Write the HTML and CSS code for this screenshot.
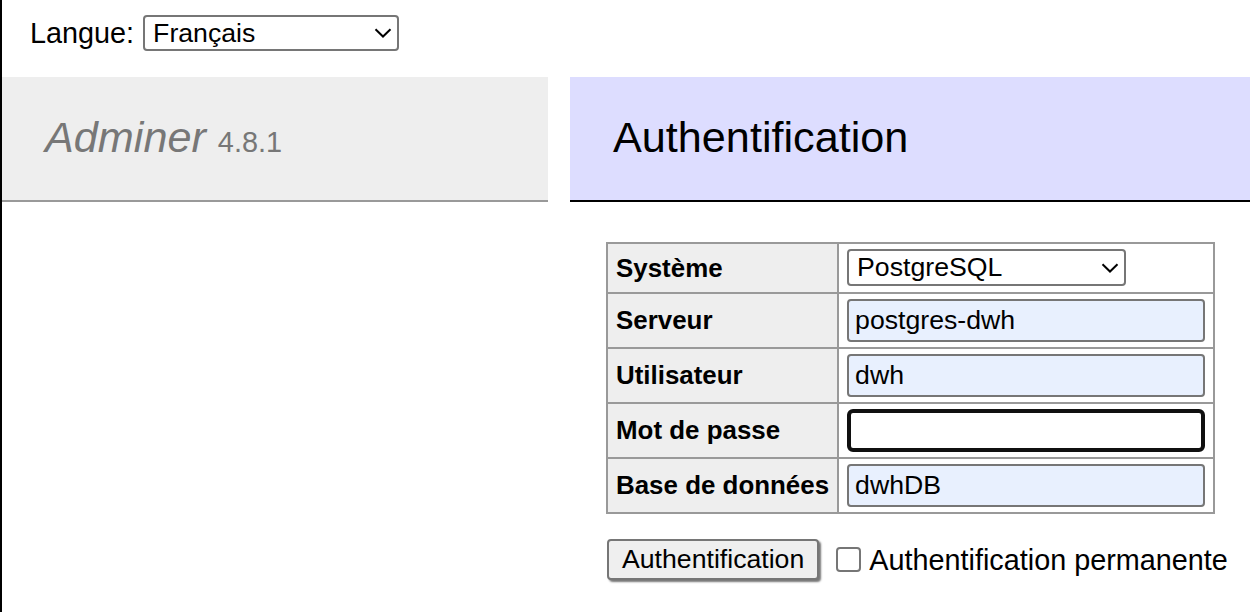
FILE: index.html
```html
<!DOCTYPE html>
<html lang="fr">
<head>
<meta charset="utf-8">
<title>Authentification - Adminer</title>
<link rel="stylesheet" href="styles.css">
</head>
<body>
<form class="lang">
  <label class="lang-label">Langue:
    <span class="select-wrap lang-select">
      <select class="select"><option>Français</option></select>
      <svg class="chevron" viewBox="0 0 18 10" width="18" height="10"><path d="M1.5 1.2 L9 8.5 L16.5 1.2" fill="none" stroke="#000" stroke-width="2"/></svg>
    </span>
  </label>
</form>
<div class="layout">
  <div class="menu">
    <h1><a class="brand">Adminer</a> <span class="version">4.8.1</span></h1>
  </div>
  <div class="content">
    <h2>Authentification</h2>
    <form class="login">
      <table class="login-table">
        <tr class="first">
          <th>Système</th>
          <td>
            <span class="select-wrap system-select">
              <select class="select"><option>PostgreSQL</option></select>
              <svg class="chevron" viewBox="0 0 18 10" width="18" height="10"><path d="M1.5 1.2 L9 8.5 L16.5 1.2" fill="none" stroke="#000" stroke-width="2"/></svg>
            </span>
          </td>
        </tr>
        <tr><th>Serveur</th><td><input class="field" type="text" value="postgres-dwh"></td></tr>
        <tr><th>Utilisateur</th><td><input class="field" type="text" value="dwh"></td></tr>
        <tr><th>Mot de passe</th><td><input class="field password" type="password" value=""></td></tr>
        <tr><th>Base de données</th><td><input class="field" type="text" value="dwhDB"></td></tr>
      </table>
      <p class="actions">
        <button class="btn" type="button">Authentification</button>
        <label class="permanent"><span class="checkbox"></span>Authentification permanente</label>
      </p>
    </form>
  </div>
</div>
</body>
</html>
```
FILE: styles.css
```css
html, body {
  margin: 0;
  padding: 0;
}
body {
  border-left: 2px solid #000;
  min-height: 100vh;
  box-sizing: border-box;
  font: 28.8px/1.25 "Liberation Sans", Arial, sans-serif;
  color: #000;
  background: #fff;
  overflow: hidden;
}
.lang {
  height: 77px;
  box-sizing: border-box;
  padding: 15px 0 0 28px;
}
.lang-label {
  display: flex;
  align-items: center;
  gap: 9px;
  line-height: 36px;
}
.select-wrap {
  position: relative;
  display: inline-flex;
}
.select {
  appearance: none;
  -webkit-appearance: none;
  margin: 0;
  box-sizing: border-box;
  border: 2px solid #767676;
  border-radius: 4px;
  background: #fff;
  color: #000;
  font: 26.67px/1.15 "Liberation Sans", Arial, sans-serif;
  padding: 0 8px;
}
.lang-select .select {
  width: 256px;
  height: 36px;
}
.system-select .select {
  width: 279px;
  height: 37px;
}
.chevron {
  position: absolute;
  right: 7px;
  top: 50%;
  transform: translateY(-50%);
  pointer-events: none;
}
.layout {
  display: flex;
  align-items: flex-start;
}
.menu {
  width: 546px;
  flex: none;
}
h1 {
  margin: 0;
  height: 54px;
  font-size: 43.2px;
  line-height: 54px;
  font-weight: normal;
  padding: 32.5px 43px 36.5px;
  border-bottom: 2px solid #999;
  background: #eee;
  color: #777;
}
.brand {
  font-style: italic;
  color: #777;
}
.version {
  font-size: 28.9px;
  line-height: 1;
  color: #777;
}
.content {
  flex: 1;
  margin-left: 22px;
}
h2 {
  margin: 0 0 40px;
  height: 54px;
  font-size: 43.2px;
  line-height: 54px;
  font-weight: normal;
  padding: 32.5px 43px 36.5px;
  border-bottom: 2px solid #000;
  background: #ddf;
  color: #000;
}
.login-table {
  margin-left: 36px;
  border-collapse: collapse;
  font-size: 25.92px;
  line-height: 1.25;
}
.login-table th,
.login-table td {
  border: 2px solid #999;
  padding: 5px 8px;
  vertical-align: middle;
}
.login-table .first td {
  padding: 5px 8px 6px;
}
.login-table th {
  background: #eee;
  text-align: left;
  font-weight: bold;
  white-space: nowrap;
}
.field {
  display: block;
  margin: 0;
  width: 358px;
  height: 43px;
  box-sizing: border-box;
  border: 2px solid #767676;
  border-radius: 4px;
  background: #e8f0fe;
  color: #000;
  font: 26.67px "Liberation Sans", Arial, sans-serif;
  padding: 0 6px;
  outline: none;
}
.field.password {
  background: #fff;
  border: 4px solid #101010;
  border-radius: 6px;
  padding: 0 4px;
}
.actions {
  margin: 25px 0 0 37px;
  display: flex;
  align-items: center;
  gap: 17px;
}
.btn {
  margin: 0;
  height: 41px;
  box-sizing: border-box;
  padding: 0 13px;
  border: 2px solid #767676;
  border-radius: 4px;
  background: #efefef;
  color: #000;
  font: 26.67px "Liberation Sans", Arial, sans-serif;
  box-shadow: 2px 2px 2px #777;
}
.permanent {
  display: flex;
  align-items: center;
  gap: 8px;
  line-height: 36px;
}
.checkbox {
  display: inline-block;
  width: 25px;
  height: 25px;
  box-sizing: border-box;
  border: 2px solid #767676;
  border-radius: 4px;
  background: #fff;
}
```
